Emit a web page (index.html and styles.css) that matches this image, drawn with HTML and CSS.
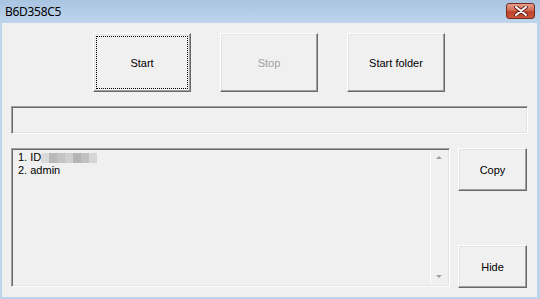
FILE: index.html
```html
<!DOCTYPE html>
<html lang="en">
<head>
  <meta charset="UTF-8">
  <title>B6D358C5</title>
  <link rel="stylesheet" href="styles.css">
</head>
<body>

<div class="window">
  <div class="titlebar">
    <span class="title">B6D358C5</span>
    <div class="close">
      <svg width="14" height="10" viewBox="0 0 14 10">
        <path d="M2 1 L12 9 M12 1 L2 9" stroke="#5a1a10" stroke-width="3.6" stroke-linecap="round"/>
        <path d="M2 1 L12 9 M12 1 L2 9" stroke="#fff" stroke-width="2" stroke-linecap="round"/>
      </svg>
    </div>
  </div>

  <div class="client">
    <div class="actions">
      <button class="btn big focused">Start</button>
      <button class="btn big" disabled>Stop</button>
      <button class="btn big">Start folder</button>
    </div>

    <div class="progress sunken"></div>

    <div class="lower">
      <div class="list sunken">
        <div class="lines">
          <div>1. ID<span class="blur"><i class="b1"></i><i class="b2"></i><i class="b3"></i><i class="b4"></i><i class="b5"></i><i class="b6"></i><i class="b7"></i></span></div>
          <div>2. admin</div>
        </div>
        <div class="scrollbar">
          <span class="arrow up"></span>
          <span class="arrow down"></span>
        </div>
      </div>
      <div class="side">
        <button class="btn small">Copy</button>
        <button class="btn small">Hide</button>
      </div>
    </div>
  </div>
</div>

</body>
</html>
```

FILE: styles.css
```css
body {
  margin: 0;
  background: #f0f0f0;
  font-family: "Liberation Sans", Arial, sans-serif;
  font-size: 11px;
}
.window {
  width: 540px;
  height: 299px;
  background: #bcd4ec;
  display: flex;
  flex-direction: column;
}
.titlebar {
  height: 23px;
  background: linear-gradient(#a9c4e1, #bed5ed);
  display: flex;
  align-items: center;
  justify-content: space-between;
  padding: 0 5px 0 5px;
  box-sizing: border-box;
}
.title {
  font-family: "Noto Sans", sans-serif;
  font-size: 12px;
  letter-spacing: -0.3px;
  color: #000;
  margin-top: -1px;
}
.close {
  width: 29px;
  height: 16px;
  margin-top: -2px;
  border: 1px solid #7a2a1c;
  border-radius: 3px;
  background: linear-gradient(#e3a08f, #d06a55 45%, #bf4229 55%, #c8553c);
  display: flex;
  align-items: center;
  justify-content: center;
  box-sizing: border-box;
}
.client {
  flex: 1;
  margin: 0 3px 2px 2px;
  background: #f0f0f0;
  padding: 10px 10px 0 9px;
  display: flex;
  flex-direction: column;
}
.actions {
  display: flex;
  justify-content: center;
  gap: 29px;
}
.btn {
  font-family: "Liberation Sans", Arial, sans-serif;
  font-size: 11px;
  color: #000;
  background: #f0f0f0;
  border: 1px solid;
  border-color: #fff #696969 #696969 #fff;
  box-shadow: inset -1px -1px #a0a0a0, inset 1px 1px #e3e3e3;
  padding: 0;
  box-sizing: border-box;
}
.btn:disabled {
  color: #a0a0a0;
}
.btn.big {
  width: 98px;
  height: 59px;
}
.btn.focused {
  outline: 1px dotted #000;
  outline-offset: -4px;
}
.btn.small {
  width: 69px;
  height: 43px;
}
.sunken {
  border: 1px solid;
  border-color: #a0a0a0 #fff #fff #a0a0a0;
  box-shadow: inset 1px 1px #696969, inset -1px -1px #e3e3e3;
  box-sizing: border-box;
}
.progress {
  height: 28px;
  margin-top: 14px;
  width: 517px;
}
.lower {
  display: flex;
  margin-top: 14px;
  gap: 8px;
}
.list {
  width: 440px;
  height: 139px;
  display: flex;
  padding: 2px;
}
.lines {
  flex: 1;
  padding: 0 0 0 4px;
  line-height: 13px;
  color: #000;
}
.blur {
  display: inline-flex;
  vertical-align: -2px;
}
.blur i {
  width: 8px;
  height: 10px;
}
.b1 { background: #dadada; }
.b2 { background: #b9b9b9; }
.b3 { background: #c3c3c3; }
.b4 { background: #cfcfcf; }
.b5 { background: #b5b5b5; }
.b6 { background: #c0c0c0; }
.b7 { background: #d6d6d6; }
.scrollbar {
  width: 17px;
  background: #f0f0f0;
  border-left: 1px solid #fff;
  box-sizing: border-box;
  display: flex;
  flex-direction: column;
  justify-content: space-between;
  align-items: center;
  padding: 5px 0 6px;
}
.arrow {
  width: 0;
  height: 0;
  border-left: 3px solid transparent;
  border-right: 3px solid transparent;
}
.arrow.up {
  border-bottom: 3px solid #a0a0a0;
}
.arrow.down {
  border-top: 3px solid #a0a0a0;
}
.side {
  display: flex;
  flex-direction: column;
  justify-content: space-between;
  height: 140px;
}
```
